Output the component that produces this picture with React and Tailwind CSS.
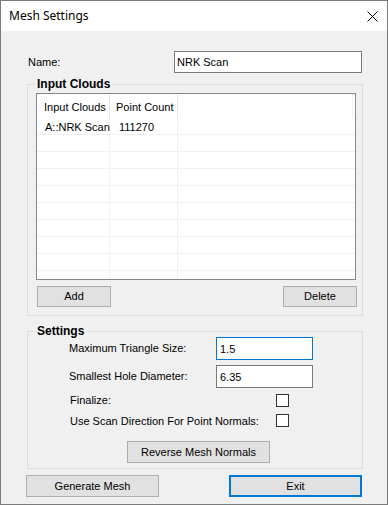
import { useState } from "react";

const rows = [["A::NRK Scan", "111270"], ...Array.from({ length: 9 }, () => ["", ""])];

function Btn({ children, className = "", focused = false }) {
  return (
    <button
      className={`flex items-center justify-center bg-[#e1e1e1] text-[11px] text-black ${
        focused ? "border-2 border-[#0078d7]" : "border border-[#adadad]"
      } ${className}`}
    >
      {children}
    </button>
  );
}

function Check() {
  const [on, setOn] = useState(false);
  return (
    <div
      onClick={() => setOn(!on)}
      className="w-[13px] h-[13px] border border-[#333] bg-white flex items-center justify-center text-[10px] leading-none"
    >
      {on ? "✓" : ""}
    </div>
  );
}

export default function App() {
  const [name, setName] = useState("NRK Scan");
  const [tri, setTri] = useState("1.5");
  const [hole, setHole] = useState("6.35");

  return (
    <div className="w-[388px] h-[505px] border border-[#7a7a7a] flex flex-col font-['Liberation_Sans',sans-serif] text-[11px] text-black">
      {/* Title bar */}
      <div className="h-[30px] bg-white flex items-center justify-between pl-[8px] pr-[9px]">
        <span className="font-['Noto_Sans',sans-serif] text-[12px]">Mesh Settings</span>
        <svg width="11" height="11" viewBox="0 0 11 11" className="mt-[1px]">
          <path d="M0.5 0.5 L10.5 10.5 M10.5 0.5 L0.5 10.5" stroke="#000" strokeWidth="1" />
        </svg>
      </div>

      <div className="flex-1 bg-[#f0f0f0] flex flex-col">
        {/* Name */}
        <div className="mt-[20px] flex items-center pl-[27px] pr-[25px]">
          <span className="flex-1">Name:</span>
          <input
            value={name}
            onChange={(e) => setName(e.target.value)}
            className="w-[188px] h-[22px] border border-[#7a7a7a] bg-white pl-[2px] outline-none"
          />
        </div>

        {/* Input Clouds */}
        <fieldset className="mt-[5px] ml-[26px] w-[336px] border border-[#dcdcdc] pb-[8px]">
          <legend className="ml-[7px] px-[2px] font-bold text-[12px] leading-[12px]">Input Clouds</legend>
          <div className="mt-[3px] ml-[8px] w-[320px] h-[187px] border border-[#828790] bg-white overflow-hidden">
            <div className="flex h-[24px] items-center">
              <div className="w-[73px] h-full flex items-center pt-[3px] pl-[7px] border-r border-[#e5e5e5]">Input Clouds</div>
              <div className="w-[68px] h-full flex items-center pt-[3px] pl-[6px] border-r border-[#e5e5e5]">Point Count</div>
              <div className="flex-1 h-full mr-[2px] border-r border-[#f0f0f0]" />
            </div>
            {rows.map((r, i) => (
              <div key={i} className="flex h-[17px] border-b border-[#f0f0f0]">
                <div className="w-[73px] flex items-center pt-[3px] pl-[8px] border-r border-[#f0f0f0] whitespace-nowrap">{r[0]}</div>
                <div className="w-[68px] flex items-center pt-[3px] pl-[9px] border-r border-[#f0f0f0]">{r[1]}</div>
                <div className="flex-1" />
              </div>
            ))}
          </div>
          <div className="mt-[6px] ml-[9px] w-[320px] flex justify-between">
            <Btn className="w-[74px] h-[21px]">Add</Btn>
            <Btn className="w-[74px] h-[21px]">Delete</Btn>
          </div>
        </fieldset>

        {/* Settings */}
        <fieldset className="mt-[9px] ml-[26px] w-[336px] border border-[#dcdcdc] pb-[5px]">
          <legend className="ml-[7px] px-[2px] font-bold text-[12px] leading-[12px]">Settings</legend>
          <div className="flex items-center pl-[41px]">
            <span className="w-[147px]">Maximum Triangle Size:</span>
            <input
              value={tri}
              onChange={(e) => setTri(e.target.value)}
              className="w-[97px] h-[23px] border border-[#0078d7] bg-white pl-[3px] outline-none"
            />
          </div>
          <div className="mt-[5px] flex items-center pl-[41px]">
            <span className="w-[147px]">Smallest Hole Diameter:</span>
            <input
              value={hole}
              onChange={(e) => setHole(e.target.value)}
              className="w-[97px] h-[23px] border border-[#7a7a7a] bg-white pl-[3px] outline-none"
            />
          </div>
          <div className="mt-[4px] flex items-center pl-[42px]">
            <span className="w-[206px]">Finalize:</span>
            <Check />
          </div>
          <div className="mt-[4px] flex items-center pl-[42px]">
            <span className="w-[206px]">Use Scan Direction For Point Normals:</span>
            <Check />
          </div>
          <Btn className="mt-[12px] ml-[99px] w-[143px] h-[22px]">Reverse Mesh Normals</Btn>
        </fieldset>

        {/* Bottom buttons */}
        <div className="mt-[6px] pl-[25px] flex gap-[70px]">
          <Btn className="w-[133px] h-[22px]">Generate Mesh</Btn>
          <Btn focused className="w-[133px] h-[22px]">Exit</Btn>
        </div>
      </div>
    </div>
  );
}
